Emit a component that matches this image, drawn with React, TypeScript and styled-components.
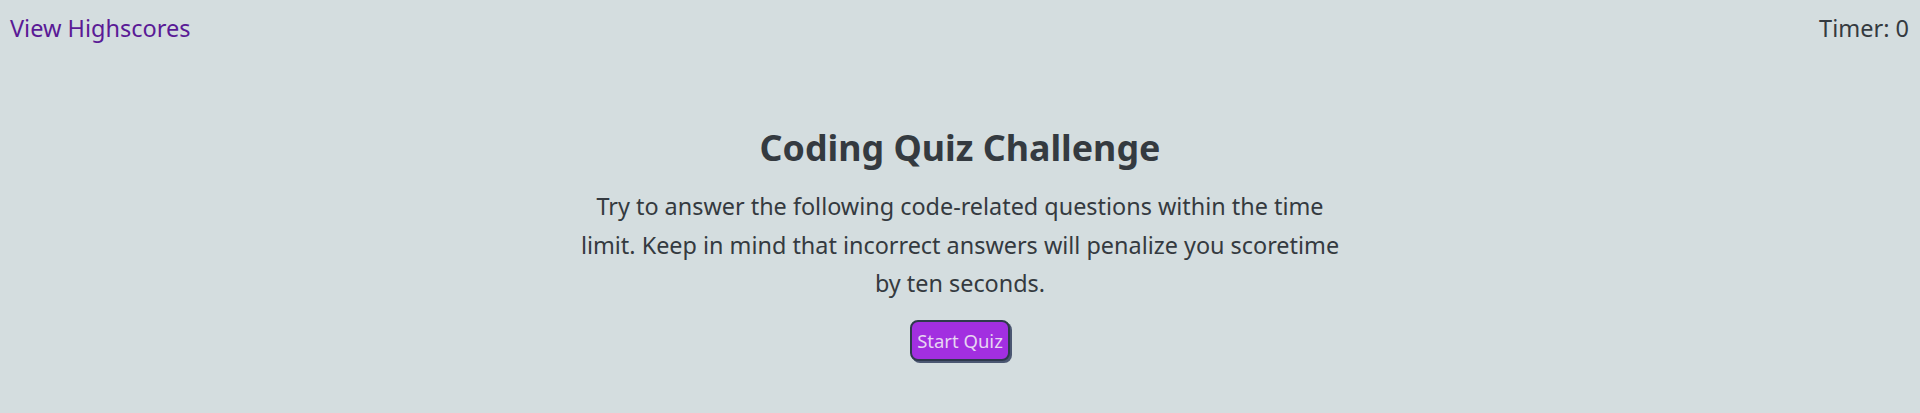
import React from "react";
import styled, { createGlobalStyle } from "styled-components";

const Global = createGlobalStyle`
  html, body { margin: 0; padding: 0; }
  body {
    background: #d4dddf;
    font-family: "Noto Sans", "Open Sans", sans-serif;
    color: #343a40;
  }
`;

const Page = styled.div`
  min-height: 413px;
  display: flex;
  flex-direction: column;
`;

const Header = styled.header`
  display: flex;
  justify-content: space-between;
  align-items: center;
  padding: 9px 11px 0 10px;
  font-size: 23.5px;
  line-height: 38px;
`;

const HighscoreLink = styled.a`
  color: #5a1a96;
  text-decoration: none;
  cursor: pointer;
`;

const Timer = styled.div`
  color: #343a40;
`;

const Main = styled.main`
  display: flex;
  flex-direction: column;
  align-items: center;
  text-align: center;
  padding-top: 76px;
`;

const Title = styled.h1`
  margin: 0;
  font-size: 35.8px;
  font-weight: 700;
  line-height: 48px;
`;

const Intro = styled.p`
  margin: 16px 0 0;
  max-width: 770px;
  font-size: 23.4px;
  line-height: 38.5px;
`;

const StartButton = styled.button`
  margin-top: 17px;
  font-family: inherit;
  font-size: 18.5px;
  line-height: 27px;
  color: #e6d6f2;
  background: #a22fe0;
  border: 2px solid #2e3a4c;
  border-radius: 8px;
  box-shadow: 2px 2px 0 #4b5772;
  padding: 5px;
  cursor: pointer;
`;

export default function App() {
  return (
    <Page>
      <Global />
      <Header>
        <HighscoreLink>View Highscores</HighscoreLink>
        <Timer>Timer: 0</Timer>
      </Header>
      <Main>
        <Title>Coding Quiz Challenge</Title>
        <Intro>
          Try to answer the following code-related questions within the time
          limit. Keep in mind that incorrect answers will penalize you scoretime
          by ten seconds.
        </Intro>
        <StartButton>Start Quiz</StartButton>
      </Main>
    </Page>
  );
}
